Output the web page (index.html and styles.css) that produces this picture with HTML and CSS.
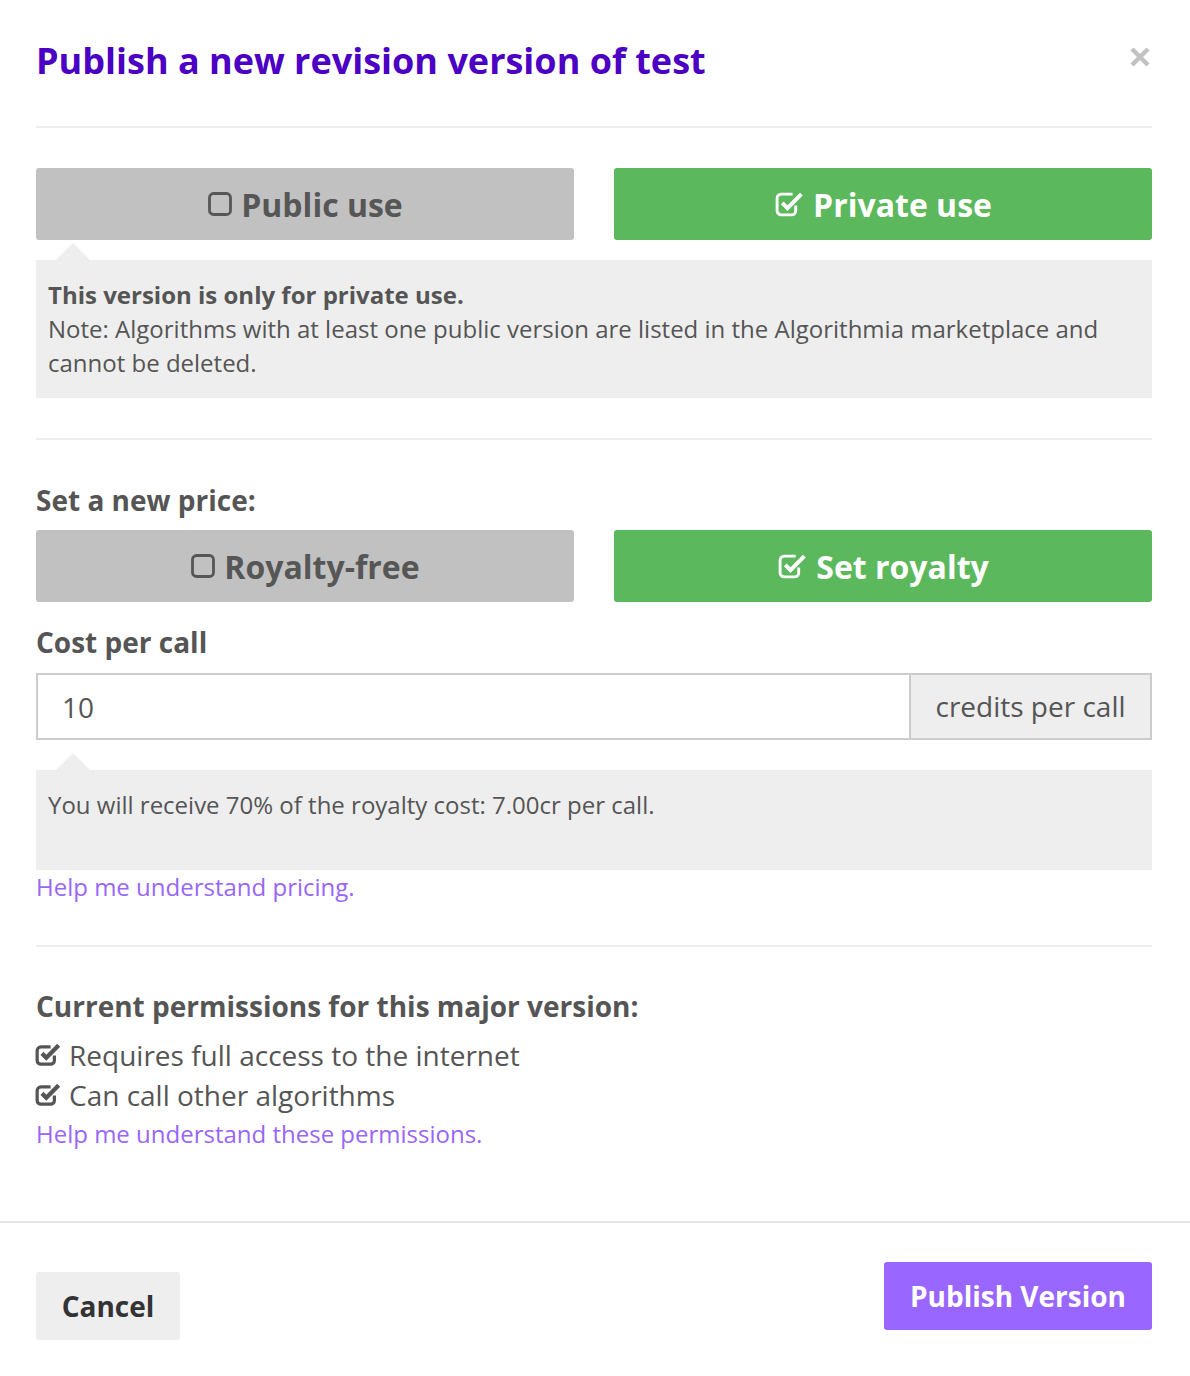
FILE: index.html
```html
<!DOCTYPE html>
<html>
<head>
<meta charset="utf-8">
<link rel="stylesheet" href="styles.css">
</head>
<body>
<div class="modal">
  <div class="modal-header">
    <h1 class="title">Publish a new revision version of test</h1>
    <span class="close" aria-label="Close">
      <svg width="22" height="22" viewBox="0 0 22 22"><path d="M3 3L19 19M19 3L3 19" stroke="#c2c2c2" stroke-width="4.5" stroke-linecap="butt"/></svg>
    </span>
  </div>
  <div class="modal-body">
    <div class="toggle-row">
      <button class="toggle off">
        <svg class="ico" width="26" height="26" viewBox="0 0 26 26"><rect x="2.5" y="2.5" width="21" height="21" rx="4" fill="none" stroke="currentColor" stroke-width="2.8"/></svg>
        Public use
      </button>
      <button class="toggle on">
        <svg class="ico" width="31" height="29" viewBox="0 0 30 28"><path d="M21 15v5a4 4 0 0 1-4 4H7a4 4 0 0 1-4-4V8a4 4 0 0 1 4-4h11" fill="none" stroke="currentColor" stroke-width="2.8"/><path d="M8 12.5l5 5L26.5 4" fill="none" stroke="currentColor" stroke-width="3.8"/></svg>
        Private use
      </button>
    </div>
    <div class="note note-top">
      <strong>This version is only for private use.</strong><br>
      Note: Algorithms with at least one public version are listed in the Algorithmia marketplace and cannot be deleted.
    </div>

    <hr class="sep">

    <div class="label label-price">Set a new price:</div>
    <div class="toggle-row">
      <button class="toggle off">
        <svg class="ico" width="26" height="26" viewBox="0 0 26 26"><rect x="2.5" y="2.5" width="21" height="21" rx="4" fill="none" stroke="currentColor" stroke-width="2.8"/></svg>
        Royalty-free
      </button>
      <button class="toggle on">
        <svg class="ico" width="31" height="29" viewBox="0 0 30 28"><path d="M21 15v5a4 4 0 0 1-4 4H7a4 4 0 0 1-4-4V8a4 4 0 0 1 4-4h11" fill="none" stroke="currentColor" stroke-width="2.8"/><path d="M8 12.5l5 5L26.5 4" fill="none" stroke="currentColor" stroke-width="3.8"/></svg>
        Set royalty
      </button>
    </div>

    <div class="label label-cost">Cost per call</div>
    <div class="input-group">
      <input class="input" type="text" value="10">
      <span class="addon">credits per call</span>
    </div>
    <div class="note note-royalty">You will receive 70% of the royalty cost: 7.00cr per call.</div>
    <a class="link link-pricing" href="#">Help me understand pricing.</a>

    <hr class="sep sep2">

    <div class="label label-perm">Current permissions for this major version:</div>
    <ul class="perms">
      <li><svg class="pico" width="28" height="26" viewBox="0 0 26 24"><path d="M18 12.5v4.5a3.5 3.5 0 0 1-3.5 3.5H5.5A3.5 3.5 0 0 1 2 17V8A3.5 3.5 0 0 1 5.5 4.5h9" fill="none" stroke="currentColor" stroke-width="3"/><path d="M6.5 10.5l4 4L22 3" fill="none" stroke="currentColor" stroke-width="4"/></svg>Requires full access to the internet</li>
      <li><svg class="pico" width="28" height="26" viewBox="0 0 26 24"><path d="M18 12.5v4.5a3.5 3.5 0 0 1-3.5 3.5H5.5A3.5 3.5 0 0 1 2 17V8A3.5 3.5 0 0 1 5.5 4.5h9" fill="none" stroke="currentColor" stroke-width="3"/><path d="M6.5 10.5l4 4L22 3" fill="none" stroke="currentColor" stroke-width="4"/></svg>Can call other algorithms</li>
    </ul>
    <a class="link link-perm" href="#">Help me understand these permissions.</a>
  </div>
  <div class="modal-footer">
    <button class="btn btn-cancel">Cancel</button>
    <button class="btn btn-publish">Publish Version</button>
  </div>
</div>
</body>
</html>
```

FILE: styles.css
```css
* { box-sizing: border-box; }
html, body { margin: 0; padding: 0; background: #fff; }
body {
  font-family: "Open Sans", "Noto Sans", sans-serif;
  color: #555;
  width: 1190px;
  height: 1376px;
  overflow: hidden;
}
.modal { width: 1190px; }

.modal-header {
  display: flex;
  justify-content: space-between;
  align-items: flex-start;
  margin: 0 38px 0 36px;
  padding: 40px 0 44px;
  border-bottom: 2px solid #eee;
}
.title {
  margin: 0;
  font-size: 36px;
  line-height: 42px;
  font-weight: 700;
  color: #4b00c4;
}
.close { display: block; margin-top: 6px; margin-right: 1px; line-height: 0; }

.modal-body { padding: 40px 38px 0 36px; }

.toggle-row {
  display: grid;
  grid-template-columns: 1fr 1fr;
  gap: 40px;
}
.toggle {
  height: 72px;
  border: 0;
  border-radius: 3px;
  font-family: inherit;
  font-size: 32px;
  font-weight: 700;
  display: flex;
  align-items: center;
  justify-content: center;
  gap: 8px;
  padding: 0;
}
.toggle.off { background: #c1c1c1; color: #565656; }
.toggle.on { background: #5cb85c; color: #fff; }
.ico { display: block; }

.note {
  position: relative;
  background: #eee;
  color: #555;
  font-size: 24px;
  line-height: 34px;
  padding: 18px 12px;
}
.note::before {
  content: "";
  position: absolute;
  left: 20px;
  top: -17px;
  border-left: 17px solid transparent;
  border-right: 17px solid transparent;
  border-bottom: 17px solid #eee;
}
.note strong { font-weight: 700; }
.note-top { margin-top: 20px; }
.note-royalty { margin-top: 30px; height: 100px; padding-top: 18px; }

.sep {
  border: 0;
  border-top: 2px solid #eee;
  margin: 40px 0 0;
  height: 0;
}

.label {
  font-size: 28px;
  font-weight: 700;
  line-height: 36px;
  color: #555;
}
.label-price { margin: 42px 0 12px; }
.label-cost { margin: 22px 0 13px; }
.label-perm { margin: 41px 0 11px; }

.input-group {
  display: flex;
  height: 67px;
  border: 2px solid #ccc;
}
.input {
  flex: 1;
  border: 0;
  outline: none;
  font-family: inherit;
  font-size: 28px;
  color: #555;
  padding: 0 24px;
  background: #fff;
  min-width: 0;
}
.addon {
  width: 241px;
  background: #eee;
  border-left: 2px solid #ccc;
  display: flex;
  align-items: center;
  justify-content: center;
  font-size: 28px;
  color: #555;
  padding-bottom: 2px;
}

.link {
  display: block;
  color: #9966fa;
  text-decoration: none;
  font-size: 24px;
  line-height: 30px;
}
.link-pricing { margin-top: 2px; }
.sep2 { margin-top: 43px; }

.perms {
  list-style: none;
  margin: 0;
  padding: 0;
}
.perms li {
  font-size: 28px;
  line-height: 40px;
  display: flex;
  align-items: center;
  color: #555;
}
.pico { margin-right: 6px; margin-left: -1px; color: #555; }
.link-perm { margin-top: 4px; }

.modal-footer {
  margin-top: 72px;
  border-top: 2px solid #e5e5e5;
  padding: 39px 38px 0 36px;
  display: flex;
  justify-content: space-between;
  align-items: flex-start;
}
.btn {
  border: 0;
  border-radius: 3px;
  font-family: inherit;
  font-size: 28px;
  font-weight: 700;
  height: 68px;
  padding: 0;
}
.btn-cancel { background: #eee; color: #333; margin-top: 10px; width: 144px; }
.btn-publish { background: #9966ff; color: #fff; width: 268px; }
```
